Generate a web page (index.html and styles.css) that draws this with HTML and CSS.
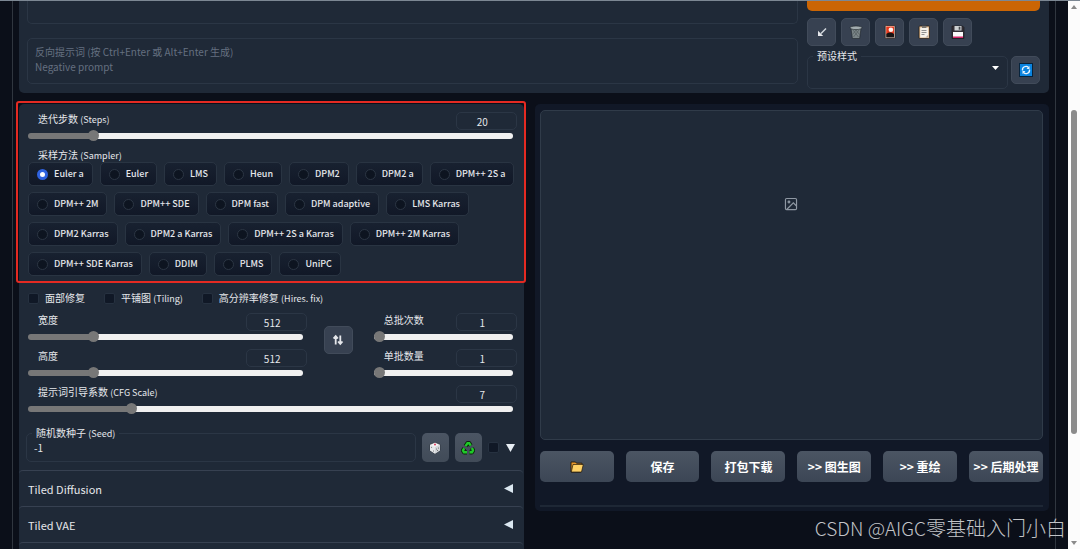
FILE: index.html
```html
<!DOCTYPE html>
<html lang="zh-CN">
<head>
<meta charset="utf-8">
<title>Stable Diffusion</title>
<link rel="stylesheet" href="styles.css">
</head>
<body>
<div class="viewport">
  <main class="page">
    <section class="panel prompt-panel">
      <div class="prompts">
        <textarea class="prompt prompt-main" aria-label="提示词"></textarea>
        <textarea class="prompt prompt-negative" aria-label="反向提示词" placeholder="反向提示词 (按 Ctrl+Enter 或 Alt+Enter 生成)&#10;Negative prompt"></textarea>
      </div>
      <div class="actions">
        <button class="generate" type="button" aria-label="生成"></button>
        <div class="tools">
          <button class="tool" type="button" aria-label="读取参数"><svg width="14" height="14" viewBox="0 0 14 14"><path d="M11 3.500 6 8.500" fill="none" stroke="#d5dae0" stroke-width="1.500"/><path d="M3 11V5.800L8.200 11z" fill="#e5e7eb"/></svg></button>
          <button class="tool" type="button" aria-label="清空"><svg width="14" height="14" viewBox="0 0 14 14"><path d="M2 3.500h10L10.600 13.500H3.400z" fill="#7b8588" stroke="#1c2428" stroke-width=".6"/><path d="M4 5l5.500 7M6.500 4.500l4 5M10 5l-5.500 7M7.500 4.500l-4 5" stroke="#4b5558" stroke-width=".6"/><ellipse cx="7" cy="2.800" rx="6" ry="1.800" fill="#a3adb0" stroke="#1c2428" stroke-width=".6"/></svg></button>
          <button class="tool" type="button" aria-label="额外网络"><svg width="14" height="14" viewBox="0 0 14 14"><rect x="2.200" y=".5" width="9.800" height="13" rx="1" fill="#f3ddd0" stroke="#1a1414" stroke-width=".7"/><path d="M3.200 1.500h7.800V9H3.200z" fill="#e5391d"/><circle cx="7.900" cy="4.800" r="2.300" fill="#fff3ee"/><path d="M3.200 9Q7 6.200 11 9v3.500H3.200z" fill="#171313"/></svg></button>
          <button class="tool" type="button" aria-label="应用样式"><svg width="14" height="14" viewBox="0 0 14 14"><rect x="2" y="1" width="10.500" height="12.500" rx="1" fill="#d8b083" stroke="#1f1a16" stroke-width=".7"/><path d="M3.200 2.500h8.100v10H3.200z" fill="#f5f2eb"/><path d="M5 .8h4.400v2.200H5z" fill="#77736d"/><path d="M4.500 5.500h5M4.500 7.500h5M4.500 9.500h3" stroke="#777" stroke-width=".8"/><path d="M8.500 12.500l2.800-2.800v2.800z" fill="#b8aca0"/></svg></button>
          <button class="tool" type="button" aria-label="保存样式"><svg width="14" height="14" viewBox="0 0 14 14"><path d="M1 1h10.500L13 2.500v11H1z" fill="#332f36" stroke="#17151a" stroke-width=".6"/><path d="M3.500 1h7v4.500h-7z" fill="#ccd0d2"/><path d="M7.700 1.700h1.700v3H7.700z" fill="#44484c"/><path d="M2 7h10v5H2z" fill="#fafafa"/><path d="M2 11.500h10v1.500H2z" fill="#d52567"/></svg></button>
        </div>
        <div class="styles-row">
          <div class="styles-field">
            <label for="styles">预设样式</label>
            <select id="styles"><option></option></select>
            <svg class="caret" width="7" height="4" viewBox="0 0 7 4"><path d="M0 0h7L3.500 4z" fill="#fff"/></svg>
          </div>
          <button class="tool" type="button" aria-label="刷新"><svg width="14" height="14" viewBox="0 0 14 14"><rect x=".5" y=".5" width="13" height="13" fill="#0a84e0" stroke="#07233c"/><path d="M3.500 7.500A3.500 3.500 0 0 1 9.500 4.500M10.500 6.500A3.500 3.500 0 0 1 4.500 9.500" fill="none" stroke="#e8f5ff" stroke-width="1.300"/><path d="M10.500 3v3h-3zM3.500 11V8h3z" fill="#e8f5ff"/></svg></button>
        </div>
      </div>
    </section>

    <div class="columns">
      <section class="panel settings">
        <div class="highlight">
          <div class="slider">
            <div class="slider-head"><label for="steps">迭代步数 <span class="latin">(Steps)</span></label><input class="number" type="text" value="20" aria-label="迭代步数"></div>
            <input class="range" id="steps" type="range" min="1" max="150" value="20" style="--fill:13%">
          </div>
          <fieldset class="samplers">
            <legend>采样方法 <span class="latin">(Sampler)</span></legend>
            <div class="options">
              <label class="option"><input type="radio" name="sampler" checked>Euler a</label>
              <label class="option"><input type="radio" name="sampler">Euler</label>
              <label class="option"><input type="radio" name="sampler">LMS</label>
              <label class="option"><input type="radio" name="sampler">Heun</label>
              <label class="option"><input type="radio" name="sampler">DPM2</label>
              <label class="option"><input type="radio" name="sampler">DPM2 a</label>
              <label class="option"><input type="radio" name="sampler">DPM++ 2S a</label>
              <label class="option"><input type="radio" name="sampler">DPM++ 2M</label>
              <label class="option"><input type="radio" name="sampler">DPM++ SDE</label>
              <label class="option"><input type="radio" name="sampler">DPM fast</label>
              <label class="option"><input type="radio" name="sampler">DPM adaptive</label>
              <label class="option"><input type="radio" name="sampler">LMS Karras</label>
              <label class="option"><input type="radio" name="sampler">DPM2 Karras</label>
              <label class="option"><input type="radio" name="sampler">DPM2 a Karras</label>
              <label class="option"><input type="radio" name="sampler">DPM++ 2S a Karras</label>
              <label class="option"><input type="radio" name="sampler">DPM++ 2M Karras</label>
              <label class="option"><input type="radio" name="sampler">DPM++ SDE Karras</label>
              <label class="option"><input type="radio" name="sampler">DDIM</label>
              <label class="option"><input type="radio" name="sampler">PLMS</label>
              <label class="option"><input type="radio" name="sampler">UniPC</label>
            </div>
          </fieldset>
        </div>

        <div class="checks">
          <label class="check"><input type="checkbox">面部修复</label>
          <label class="check"><input type="checkbox"><span>平铺图 <span class="latin">(Tiling)</span></span></label>
          <label class="check"><input type="checkbox"><span>高分辨率修复 <span class="latin">(Hires. fix)</span></span></label>
        </div>

        <div class="size-row">
          <div class="size">
            <div class="slider">
              <div class="slider-head"><label for="width">宽度</label><input class="number" type="text" value="512" aria-label="宽度"></div>
              <input class="range" id="width" type="range" min="64" max="2048" value="512" style="--fill:23%">
            </div>
            <div class="slider">
              <div class="slider-head"><label for="height">高度</label><input class="number" type="text" value="512" aria-label="高度"></div>
              <input class="range" id="height" type="range" min="64" max="2048" value="512" style="--fill:23%">
            </div>
          </div>
          <button class="tool" type="button" aria-label="交换宽高"><svg width="14" height="14" viewBox="0 0 14 14"><path d="M4.700 11.500V3.500M2.500 5.500 4.700 3l2.200 2.500M9.300 2.500v8M7.100 8.500l2.200 2.500 2.200-2.500" fill="none" stroke="#e5e7eb" stroke-width="1.800"/></svg></button>
          <div class="batch">
            <div class="slider">
              <div class="slider-head"><label for="count">总批次数</label><input class="number" type="text" value="1" aria-label="总批次数"></div>
              <input class="range" id="count" type="range" min="1" max="100" value="1" style="--fill:0%">
            </div>
            <div class="slider">
              <div class="slider-head"><label for="batch">单批数量</label><input class="number" type="text" value="1" aria-label="单批数量"></div>
              <input class="range" id="batch" type="range" min="1" max="8" value="1" style="--fill:0%">
            </div>
          </div>
        </div>

        <div class="slider">
          <div class="slider-head"><label for="cfg">提示词引导系数 <span class="latin">(CFG Scale)</span></label><input class="number" type="text" value="7" aria-label="提示词引导系数"></div>
          <input class="range" id="cfg" type="range" min="1" max="30" value="7" style="--fill:21%">
        </div>

        <div class="seed-row">
          <div class="seed-field">
            <label for="seed">随机数种子 <span class="latin">(Seed)</span></label>
            <input id="seed" type="text" value="-1">
          </div>
          <button class="seed-button" type="button" aria-label="随机种子"><svg width="14" height="14" viewBox="0 0 14 14"><path d="M7 1.200 12 3.500v6L7 12.800 2 9.500v-6z" fill="#f4f4f4" stroke="#222a31" stroke-width=".6"/><path d="M2 3.500 7 6v6.800L2 9.500z" fill="#e6e8ea"/><path d="M12 3.500 7 6v6.800l5-3.300z" fill="#d3d6d9"/><circle cx="7" cy="3.600" r="1" fill="#d9395b"/><g fill="#555"><circle cx="3.600" cy="6.300" r=".5"/><circle cx="5.500" cy="10" r=".5"/><circle cx="8.500" cy="8" r=".5"/><circle cx="10.500" cy="7" r=".5"/><circle cx="9.500" cy="9.500" r=".5"/></g></svg></button>
          <button class="seed-button" type="button" aria-label="重用种子"><svg width="14" height="14" viewBox="0 0 14 14"><g fill="none" stroke="#0a240b" stroke-width="4.200" stroke-linejoin="round"><path d="M4.500 5.200 6.500 2.200h1.700l1.500 2.400M11 7l1 2.500-1 1.800H8.500M6 11.300H3L2 9.500l1.200-2.200"/></g><g fill="none" stroke="#1fc928" stroke-width="2.400"><path d="M4.500 5.200 6.500 2.200h1.700l1.500 2.400M11 7l1 2.500-1 1.800H8.500M6 11.300H3L2 9.500l1.200-2.200"/></g></svg></button>
          <label class="extra"><input type="checkbox" aria-label="额外种子"><svg width="9" height="9" viewBox="0 0 9 9"><path d="M0 1h9L4.500 9z" fill="#e8eef4"/></svg></label>
        </div>

        <button class="accordion" type="button">Tiled Diffusion<svg width="9" height="9" viewBox="0 0 9 9"><path d="M9 0v9L0 4.500z" fill="#dbe7f0"/></svg></button>
        <button class="accordion" type="button">Tiled VAE<svg width="9" height="9" viewBox="0 0 9 9"><path d="M9 0v9L0 4.500z" fill="#dbe7f0"/></svg></button>
        <button class="accordion" type="button" aria-label="更多"></button>
      </section>

      <section class="output">
        <div class="gallery"><svg width="14" height="14" viewBox="0 0 24 24" fill="none" stroke="#8f98a3" stroke-width="2"><rect x="2.500" y="2.500" width="19" height="19" rx="2"/><circle cx="8.500" cy="8.500" r="1.500"/><path d="M21 15l-5-5L5 21"/></svg></div>
        <div class="output-buttons">
          <button type="button" aria-label="打开文件夹"><svg width="14" height="12" viewBox="0 0 14 12"><path d="M1 1h4.500l1 1.200H12V4L10.800 11H1z" fill="#e8982c" stroke="#24180a" stroke-width=".9"/><path d="M3 3.500h10.300L11.500 11H1.300z" fill="#ffd166" stroke="#24180a" stroke-width=".7"/></svg></button>
          <button type="button">保存</button>
          <button type="button">打包下载</button>
          <button type="button">&gt;&gt; 图生图</button>
          <button type="button">&gt;&gt; 重绘</button>
          <button type="button">&gt;&gt; 后期处理</button>
        </div>
        <hr>
      </section>
    </div>
  </main>
  <div class="scrollbar">
    <svg width="6" height="4" viewBox="0 0 6 4"><path d="M0 4h6L3 0z" fill="#8a8a8a"/></svg>
    <div class="thumb"></div>
    <svg width="6" height="4" viewBox="0 0 6 4"><path d="M0 0h6L3 4z" fill="#8a8a8a"/></svg>
  </div>
  <div class="watermark"><span class="handle">CSDN @AIGC</span>零基础入门小白</div>
</div>
</body>
</html>
```

FILE: styles.css
```css
* { box-sizing: border-box; }

body {
  margin: 0;
  background: #0b0f19;
  color: #e5e7eb;
  font: 10px/14px "Noto Sans CJK SC", sans-serif;
}

button, input, textarea, select {
  margin: 0;
  padding: 0;
  color: inherit;
  font: inherit;
}

svg { display: block; flex: none; }

.latin { font-size: 9px; line-height: 1; }

.viewport {
  position: relative;
  display: flex;
  height: 100vh;
  overflow: hidden;
  border-top: 1px solid #7c8793;
}

.page {
  flex: 1;
  min-width: 0;
  margin: 0 12px;
  padding: 0 6px;
  border: solid #30363f;
  border-width: 0 1px;
}

.panel { background: #1f2937; }

.prompt-panel {
  display: flex;
  gap: 9px;
  padding: 0 9px 4px 8px;
  border-radius: 0 0 5px 5px;
}

.prompts {
  flex: 1;
  display: flex;
  flex-direction: column;
  gap: 14px;
}

.prompt {
  display: block;
  width: 100%;
  padding: 5px 7px;
  border: 1px solid #2b3645;
  border-radius: 5px;
  background: transparent;
  resize: none;
  outline: none;
  line-height: 15px;
}

.prompt::placeholder { color: #657080; }
.prompt-main { height: 23px; border-top: 0; border-radius: 0 0 5px 5px; }
.prompt-negative { height: 46px; }

.actions { width: 233px; }

.generate {
  display: block;
  width: 100%;
  height: 10px;
  border: 0;
  border-radius: 0 0 5px 5px;
  background: #cb6504;
}

.tools {
  display: flex;
  gap: 5px;
  margin-top: 7px;
}

.tool {
  display: grid;
  place-items: center;
  flex: none;
  width: 29px;
  height: 28px;
  border: 1px solid #414b5a;
  border-radius: 5px;
  background: #374151;
}

.styles-row {
  display: flex;
  gap: 3px;
  margin-top: 10px;
}

.styles-field {
  position: relative;
  flex: 1;
  height: 33px;
}

.styles-field select {
  width: 100%;
  height: 100%;
  border: 1px solid #2b3645;
  border-radius: 5px;
  background: transparent;
  appearance: none;
}

.styles-field label, .seed-field label {
  position: absolute;
  top: -7px;
  left: 6px;
  padding: 0 4px;
  background: #1f2937;
}

.caret { position: absolute; top: 10px; right: 9px; }

.columns {
  display: flex;
  align-items: flex-start;
  gap: 12px;
  margin-top: 11px;
}

.settings {
  flex: 0 0 49%;
  margin-right: -1px;
  padding-right: 1px;
  border-radius: 5px 5px 0 0;
}

.highlight {
  position: relative;
  padding: 8px 0 4px;
}

.highlight::after {
  content: "";
  position: absolute;
  inset: -3px;
  border: 2px solid #e42a22;
  border-radius: 3px;
  pointer-events: none;
}

.slider { height: 36px; padding: 0 6px 0 9px; }

.slider-head {
  display: flex;
  justify-content: space-between;
  padding-left: 10px;
}

.number {
  width: 61px;
  height: 18px;
  padding-right: 8px;
  border: 1px solid #2b3645;
  border-radius: 5px;
  background: transparent;
  text-align: center;
}

.range {
  display: block;
  width: calc(100% - 4px);
  height: 11px;
  background: transparent;
  appearance: none;
}

.range::-webkit-slider-runnable-track {
  height: 6px;
  border-radius: 3px;
  background: linear-gradient(to right, #777 var(--fill), #f0f0f0 var(--fill));
}

.range::-webkit-slider-thumb {
  width: 11px;
  height: 11px;
  margin-top: -3px;
  border-radius: 50%;
  background: #777;
  appearance: none;
}

.samplers {
  margin: 0;
  padding: 0 5px 0 9px;
  border: 0;
}

.samplers legend { padding: 0 10px; }

.options {
  display: flex;
  flex-wrap: wrap;
  gap: 6px 7px;
}

.option {
  display: flex;
  align-items: center;
  gap: 6px;
  height: 24px;
  padding: 0 8px;
  border: 1px solid #293442;
  border-radius: 5px;
  background: linear-gradient(#182130, #111827);
  font-size: 9px;
  font-weight: 500;
}

.option input {
  width: 11px;
  height: 11px;
  border: 1px solid #2c3644;
  border-radius: 50%;
  background: #0d1420;
  appearance: none;
}

.option input:checked {
  border: 3px solid #2f62df;
  background: #fff;
}

.checks {
  display: flex;
  gap: 19px;
  padding: 11px 9px 8px;
}

.check { display: flex; align-items: center; gap: 6px; }

.check input, .extra input {
  width: 11px;
  height: 11px;
  border: 1px solid #263140;
  border-radius: 2px;
  background: #101826;
  appearance: none;
}

.size-row { display: flex; }
.size { flex: 1; }
.size-row .tool { margin: 13px 12px 0 11px; }
.batch { width: 158px; }

.seed-row {
  display: flex;
  gap: 6px;
  padding: 12px 8px 8px 7px;
}

.seed-field { position: relative; flex: 1; }

.seed-field input {
  display: block;
  width: 100%;
  height: 29px;
  padding: 0 7px;
  border: 1px solid #2b3645;
  border-radius: 5px;
  background: transparent;
}

.seed-button {
  display: grid;
  place-items: center;
  width: 27px;
  height: 29px;
  border: 0;
  border-radius: 5px;
  background: linear-gradient(#4b5563, #414b58);
}

.extra { display: flex; align-items: center; gap: 7px; }

.accordion {
  display: flex;
  align-items: center;
  justify-content: space-between;
  width: 100%;
  height: 36px;
  padding: 0 10px 0 9px;
  border: 0;
  border-top: 1px solid #374151;
  border-radius: 4px;
  background: transparent;
  font-size: 11px;
}

.output {
  flex: 1;
  min-width: 0;
  padding: 6px 6px 4px 5px;
  border-radius: 5px;
  background: #111827;
}

.gallery {
  display: flex;
  justify-content: center;
  height: 330px;
  padding-top: 86px;
  border: 1px solid #303b49;
  border-radius: 5px;
  background: #1f2937;
}

.output-buttons {
  display: grid;
  grid-template-columns: repeat(6, 1fr);
  gap: 12px;
  margin-top: 11px;
}

.output-buttons button {
  display: grid;
  place-items: center;
  height: 31px;
  border: 0;
  border-radius: 5px;
  background: linear-gradient(#4b5563, #3c4655);
  color: #fff;
  font-size: 12px;
  font-weight: 700;
  white-space: nowrap;
}

.output hr {
  margin: 23px 0 0;
  border: 0;
  border-top: 2px solid #1e2735;
}

.scrollbar {
  display: flex;
  flex-direction: column;
  align-items: center;
  width: 12px;
  padding: 4px 0;
  background: #fcfcfc;
}

.thumb {
  width: 6px;
  height: 59vh;
  margin: 101px 0 auto;
  border-radius: 3px;
  background: #8b8b8b;
}

.watermark {
  position: absolute;
  right: 14px;
  bottom: 6px;
  color: #c2c4c8;
  font-size: 20px;
  font-weight: 300;
  line-height: 30px;
}

.handle { font-size: 19px; }
```
